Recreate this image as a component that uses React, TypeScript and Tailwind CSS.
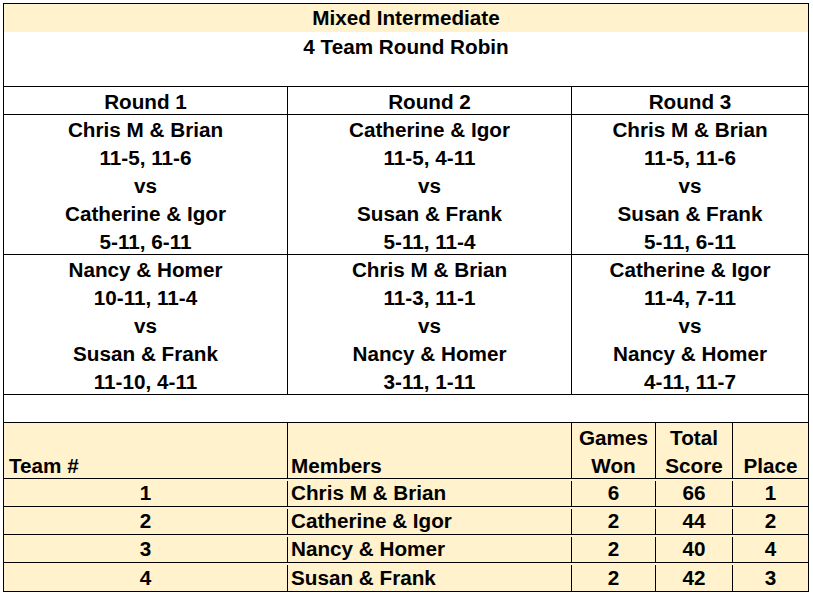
import React from 'react';

type Match = { a: string; sa: string; b: string; sb: string };

const rounds: Match[][] = [
  [
    { a: 'Chris M & Brian', sa: '11-5, 11-6', b: 'Catherine & Igor', sb: '5-11, 6-11' },
    { a: 'Nancy & Homer', sa: '10-11, 11-4', b: 'Susan & Frank', sb: '11-10, 4-11' },
  ],
  [
    { a: 'Catherine & Igor', sa: '11-5, 4-11', b: 'Susan & Frank', sb: '5-11, 11-4' },
    { a: 'Chris M & Brian', sa: '11-3, 11-1', b: 'Nancy & Homer', sb: '3-11, 1-11' },
  ],
  [
    { a: 'Chris M & Brian', sa: '11-5, 11-6', b: 'Susan & Frank', sb: '5-11, 6-11' },
    { a: 'Catherine & Igor', sa: '11-4, 7-11', b: 'Nancy & Homer', sb: '4-11, 11-7' },
  ],
];

const standings = [
  { team: '1', members: 'Chris M & Brian', won: '6', score: '66', place: '1' },
  { team: '2', members: 'Catherine & Igor', won: '2', score: '44', place: '2' },
  { team: '3', members: 'Nancy & Homer', won: '2', score: '40', place: '4' },
  { team: '4', members: 'Susan & Frank', won: '2', score: '42', place: '3' },
];

const widths = ['w-[284px] border-r border-black', 'w-[284px] border-r border-black', 'w-[236px]'];

const Line: React.FC<{ text: string }> = ({ text }) => (
  <div className="h-[28px] pt-[2px] flex items-center justify-center">{text}</div>
);

const MatchCell: React.FC<{ m: Match; cls: string }> = ({ m, cls }) => (
  <div className={cls}>
    <Line text={m.a} />
    <Line text={m.sa} />
    <Line text="vs" />
    <Line text={m.b} />
    <Line text={m.sb} />
  </div>
);

export default function App() {
  return (
    <div className="bg-white w-[813px] h-[595px] pt-[3px] pl-[3px] text-black">
      <div
        className="w-[806px] border border-black text-[20.7px] font-bold leading-none"
        style={{ fontFamily: '"Liberation Sans", Arial, sans-serif' }}
      >
        <div className="h-[28px] bg-[#fff2cc] flex items-center justify-center">Mixed Intermediate</div>
        <div className="h-[55px] border-b border-black">
          <Line text="4 Team Round Robin" />
        </div>

        <div className="flex h-[28px] border-b border-black">
          {['Round 1', 'Round 2', 'Round 3'].map((r, i) => (
            <div key={r} className={`${widths[i]} pt-[3px] flex items-center justify-center`}>{r}</div>
          ))}
        </div>

        {[0, 1].map((row) => (
          <div key={row} className="flex h-[140px] border-b border-black">
            {rounds.map((rd, i) => (
              <MatchCell key={i} m={rd[row]} cls={widths[i]} />
            ))}
          </div>
        ))}

        <div className="h-[28px] border-b border-black" />

        <div className="bg-[#fff2cc]">
          <div className="flex h-[56px] border-b border-black">
            <div className="w-[284px] border-r border-black flex items-end h-full pl-[5px] pb-[1px]">Team #</div>
            <div className="w-[284px] border-r border-black flex items-end h-full pl-[3px] pb-[1px]">Members</div>
            <div className="w-[84px] border-r border-black">
              <Line text="Games" />
              <Line text="Won" />
            </div>
            <div className="w-[77px] border-r border-black">
              <Line text="Total" />
              <Line text="Score" />
            </div>
            <div className="w-[75px] flex items-end justify-center h-full pb-[1px]">Place</div>
          </div>
          {standings.map((s, i) => (
            <div key={s.team} className={`flex h-[28px] pt-[2px] ${i < 3 ? 'border-b border-black' : ''}`}>
              <div className="w-[284px] border-r border-black flex items-center justify-center">{s.team}</div>
              <div className="w-[284px] border-r border-black flex items-center pl-[3px]">{s.members}</div>
              <div className="w-[84px] border-r border-black flex items-center justify-center">{s.won}</div>
              <div className="w-[77px] border-r border-black flex items-center justify-center">{s.score}</div>
              <div className="w-[75px] flex items-center justify-center">{s.place}</div>
            </div>
          ))}
        </div>
      </div>
    </div>
  );
}
